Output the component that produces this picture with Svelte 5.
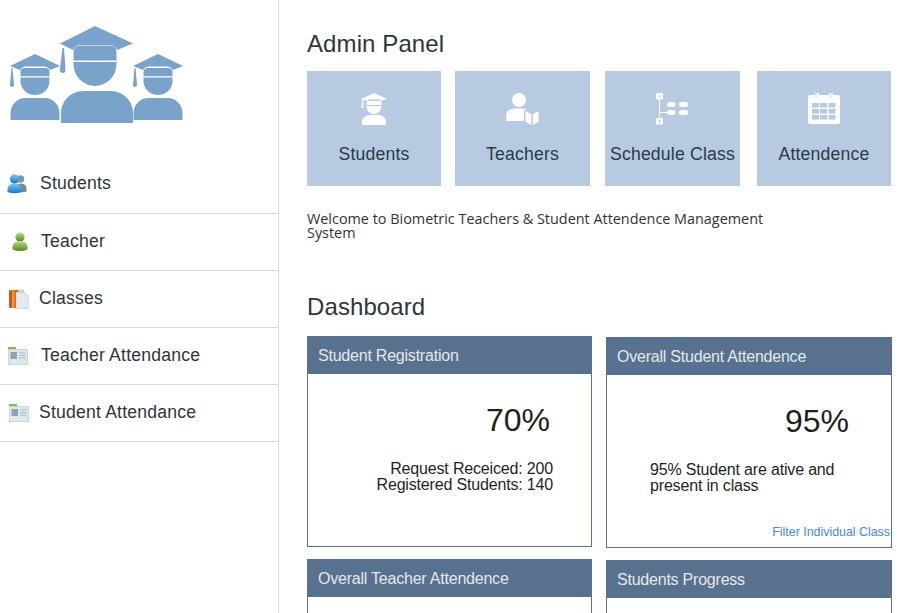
<script>
  // Panel de administración: menú lateral, accesos rápidos y tarjetas del dashboard
  const menu = [
    { nombre: "Students", icono: "students" },
    { nombre: "Teacher", icono: "teacher" },
    { nombre: "Classes", icono: "classes" },
    { nombre: "Teacher Attendance", icono: "card" },
    { nombre: "Student Attendance", icono: "card" }
  ];
</script>

{#snippet chico(x, y)}
  <g transform="translate({x} {y})">
    <path d="M0 0 L25 12 L15 16 Q13 12.5 9 12.5 L-9 12.5 Q-13 12.5 -15 16 L-25 12 Z" />
    <path d="M-23.5 14 L-22.5 14 L-21 31 Q-21 33 -23 33 Q-25.5 33 -25 30 Z" />
    <path d="M-14.5 17.5 Q-14.5 14 -10 14 L10 14 Q14.5 14 14.5 17.5 L14.5 22.3 L-14.5 22.3 Z" />
    <path d="M-14.5 23.5 L14.5 23.5 L14.5 27 A14.5 14 0 0 1 -14.5 27 Z" />
    <path d="M-24.5 66 V59 A15 15 0 0 1 -9.5 44 H9.5 A15 15 0 0 1 24.5 59 V66 Z" />
  </g>
{/snippet}

<div class="page">
  <aside class="sidebar">
    <svg class="logo" viewBox="0 0 190 130" width="190" height="130" fill="#7aa3cb">
      {@render chico(35, 44)}
      {@render chico(158, 44)}
      <g transform="translate(95 16)">
        <path d="M0 0 L38 17.5 L22 24 Q20 19 14 19 L-14 19 Q-20 19 -22 24 L-35 17.5 Z" />
        <path d="M-32.5 22 L-31 22 L-29.5 44 Q-29.5 47 -32 47 Q-35.5 47 -35 43 Z" />
        <path d="M-21.5 26 Q-21.5 19.5 -15 19.5 L15 19.5 Q21.5 19.5 21.5 26 L21.5 34.5 L-21.5 34.5 Z" />
        <path d="M-21.5 36 L21.5 36 L21.5 38 A21.5 22 0 0 1 -21.5 38 Z" />
        <path d="M-34 97 V87 A22 22 0 0 1 -12 65 H16 A22 22 0 0 1 38 87 V97 Z" />
      </g>
    </svg>

    <nav class="menu">
      {#each menu as item, i}
        <div class="item fila-{i + 1}">
          <span class="icono">
            {#if item.icono === "students"}
              <svg viewBox="0 0 20 20" width="20" height="20">
                <defs>
                  <linearGradient id="azul" x1="0" y1="0" x2="0" y2="1">
                    <stop offset="0" stop-color="#7cc6f2" />
                    <stop offset="1" stop-color="#1a78c8" />
                  </linearGradient>
                </defs>
                <circle cx="13.5" cy="5" r="3.8" fill="#7e95a3" />
                <path d="M9 18.5 L9 12 Q10 9.5 13.5 9.5 Q19 9.5 19.5 14 L19.5 18 Z" fill="#74899a" />
                <circle cx="7.5" cy="5" r="4.7" fill="url(#azul)" />
                <path d="M0.5 18 L0.5 15 Q1 9.5 7.5 9.5 Q14 9.5 14.5 15 L14.5 18 Q7.5 20.5 0.5 18 Z" fill="url(#azul)" />
              </svg>
            {:else if item.icono === "teacher"}
              <svg viewBox="0 0 16 20" width="16" height="20">
                <defs>
                  <linearGradient id="verde" x1="0" y1="0" x2="0" y2="1">
                    <stop offset="0" stop-color="#c4dc8e" />
                    <stop offset="1" stop-color="#4f8a23" />
                  </linearGradient>
                </defs>
                <circle cx="8" cy="5" r="4.6" fill="url(#verde)" />
                <path d="M0.5 17.5 L0.5 14 Q1.5 9 8 9 Q14.5 9 15.5 14 L15.5 17.5 Q8 20.5 0.5 17.5 Z" fill="url(#verde)" />
              </svg>
            {:else if item.icono === "classes"}
              <svg viewBox="0 0 20 20" width="20" height="20">
                <rect x="0" y="1" width="13" height="18" rx="1" fill="#c9581a" />
                <rect x="3" y="1" width="2.5" height="18" fill="#eb9a3f" />
                <path d="M7 3 L15 3 L20 8 L20 19.5 L7 19.5 Z" fill="#e4e9ed" stroke="#b9c4cb" stroke-width="0.6" />
                <rect x="9" y="0.5" width="6" height="3.5" rx="1" fill="#c8d0d6" />
                <rect x="0.5" y="1" width="6" height="1.5" fill="#e07a2c" />
              </svg>
            {:else}
              <svg viewBox="0 0 20 18" width="20" height="18">
                <rect x="0" y="0" width="8" height="2.5" fill="#7fbf4d" />
                <rect x="0.3" y="2.3" width="19.4" height="15.4" fill="#dde7ec" stroke="#b9c9d1" stroke-width="0.6" />
                <rect x="2.5" y="5" width="6.5" height="7" fill="#8ba3b2" />
                <path d="M11 6 H17.5 M11 8.5 H17.5 M11 11 H17.5" stroke="#a9b9c2" stroke-width="1" />
              </svg>
            {/if}
          </span>
          <span class="texto">{item.nombre}</span>
        </div>
      {/each}
    </nav>
  </aside>

  <main class="content">
    <h1>Admin Panel</h1>

    <div class="tiles">
      <div class="tile t1">
        <svg viewBox="0 0 26 34" width="26" height="34" fill="#fff">
          <path d="M13 0 L26 6 L20 8 Q19 6.5 17 6.5 L9 6.5 Q7 6.5 6 8 L0 6 Z" />
          <path d="M1 7 L2 7 L2.6 15 L0.5 15 Z" />
          <path d="M5.5 9.5 Q5.5 8 8 8 L18 8 Q20.5 8 20.5 9.5 L20.5 12 L5.5 12 Z" />
          <path d="M5.5 13 L20.5 13 A7.5 8 0 0 1 5.5 13 Z" />
          <path d="M1 32 L1 28 A8 7 0 0 1 9 22 L17 22 A8 7 0 0 1 25 28 L25 32 Z" />
        </svg>
        <span>Students</span>
      </div>
      <div class="tile t2">
        <svg viewBox="0 0 33 33" width="33" height="33" fill="#fff">
          <circle cx="13" cy="7" r="7" />
          <path d="M0 28 L0 22 A8 7 0 0 1 8 15.5 L18 15.5 A8 7 0 0 1 20 16 L18 18 L18 28 Z" />
          <path d="M19.5 18 L25.5 21 L25.5 32 L19.5 29 Z" />
          <path d="M27 21 L32.5 18 L32.5 29 L27 32 Z" />
        </svg>
        <span>Teachers</span>
      </div>
      <div class="tile t3">
        <svg viewBox="0 0 33 33" width="33" height="33" fill="#fff">
          <rect x="0" y="0" width="7" height="6.5" rx="1.2" />
          <rect x="0" y="25" width="7" height="6.5" rx="1.2" />
          <rect x="3" y="6" width="1" height="19" />
          <rect x="3" y="19" width="8" height="1" />
          <rect x="11" y="9" width="8.5" height="5" rx="2.5" />
          <rect x="23" y="9" width="9" height="5" rx="2.5" />
          <rect x="11" y="17" width="8.5" height="5" rx="2.5" />
          <rect x="23" y="17" width="9" height="5" rx="2.5" />
          <path d="M2 3.2 H5 M2 28.2 H5 M3.5 26.8 V29.7" stroke="#b7cae1" stroke-width="0.9" />
        </svg>
        <span>Schedule Class</span>
      </div>
      <div class="tile t4">
        <svg viewBox="0 0 33 33" width="33" height="33">
          <path d="M2 2 H7 V0.5 Q9 -1 11 0.5 V2 H21 V0.5 Q23 -1 25 0.5 V2 H30 Q32 2 32 4 V29 Q32 31 30 31 H2 Q0 31 0 29 V4 Q0 2 2 2 Z" fill="#fff" />
          {#each [10, 16, 22] as y}
            {#each [4, 12, 20.5] as x}
              <rect {x} {y} width="7" height="4.6" fill="#b7cae1" />
            {/each}
          {/each}
          <path d="M8 0 V5 M23 0 V5" stroke="#b7cae1" stroke-width="0.8" />
        </svg>
        <span>Attendence</span>
      </div>
    </div>

    <p class="bienvenida">Welcome to Biometric Teachers &amp; Student Attendence Management System</p>

    <h2>Dashboard</h2>

    <div class="panels">
      <section class="panel">
        <header>Student Registration</header>
        <div class="cuerpo">
          <div class="valor v1">70%</div>
          <p class="nota derecha">Request Receiced: 200<br />Registered Students: 140</p>
        </div>
      </section>
      <section class="panel baja">
        <header>Overall Student Attendence</header>
        <div class="cuerpo">
          <div class="valor v2">95%</div>
          <p class="nota izquierda">95% Student are ative and present in class</p>
          <span class="filtro">Filter Individual Class</span>
        </div>
      </section>
      <section class="panel">
        <header>Overall Teacher Attendence</header>
        <div class="cuerpo"></div>
      </section>
      <section class="panel baja">
        <header>Students Progress</header>
        <div class="cuerpo"></div>
      </section>
    </div>
  </main>
</div>

<style>
  :global(body) {
    background: #fff;
    font-family: "Liberation Sans", Arial, sans-serif;
  }

  .page {
    display: flex;
    height: 613px;
    overflow: hidden;
    color: #2d3640;
  }

  .sidebar {
    width: 278px;
    flex: none;
    border-right: 1px solid #dedede;
  }

  .logo {
    display: block;
    margin-top: 10px;
  }

  .menu {
    margin-top: 17px;
  }

  .item {
    display: flex;
    align-items: center;
    box-sizing: border-box;
    height: 57px;
    border-bottom: 1px solid #d9d9d9;
    font-size: 17.6px;
    letter-spacing: 0.2px;
    padding-bottom: 1px;
  }

  .icono {
    display: flex;
    flex: none;
  }

  .fila-1 { padding-bottom: 3px; }
  .fila-1 .icono { margin-left: 7px; }
  .fila-1 .texto { margin-left: 13px; }
  .fila-2 .icono { margin-left: 12px; }
  .fila-2 .texto { margin-left: 13px; }
  .fila-3 .icono { margin-left: 9px; }
  .fila-3 .texto { margin-left: 10px; }
  .fila-4 .icono { margin-left: 8px; }
  .fila-4 .texto { margin-left: 13px; }
  .fila-5 .icono { margin-left: 9px; }
  .fila-5 .texto { margin-left: 10px; }

  .content {
    padding-left: 28px;
    flex: 1;
  }

  h1,
  h2 {
    font-weight: 400;
    font-size: 24px;
    margin: 0;
    letter-spacing: 0.1px;
    color: #2d3640;
  }

  h1 {
    margin-top: 30px;
    line-height: 28px;
  }

  .tiles {
    display: flex;
    margin-top: 13px;
  }

  .tile {
    height: 115px;
    background: #b7cae1;
    display: flex;
    flex-direction: column;
    align-items: center;
    font-size: 17.6px;
    letter-spacing: 0.2px;
    color: #2b3a48;
    box-sizing: border-box;
    padding-top: 22px;
    position: relative;
  }

  .tile span {
    position: absolute;
    top: 73px;
    white-space: nowrap;
  }

  .t1 { width: 134px; }
  .t2 { width: 135px; margin-left: 14px; }
  .t3 { width: 135px; margin-left: 15px; }
  .t4 { width: 134px; margin-left: 17px; }

  .bienvenida {
    width: 480px;
    margin: 26px 0 0;
    font-family: "Open Sans", sans-serif;
    font-size: 14.4px;
    line-height: 14px;
    color: #333;
  }

  h2 {
    margin-top: 53px;
    line-height: 28px;
  }

  .panels {
    display: grid;
    grid-template-columns: 285px 286px;
    column-gap: 14px;
    row-gap: 12px;
    margin-top: 15px;
  }

  .panel {
    height: 211px;
    border: 1px solid #57718f;
    box-sizing: border-box;
    display: flex;
    flex-direction: column;
  }

  .baja {
    position: relative;
    top: 1px;
  }

  .panel header {
    height: 37px;
    flex: none;
    background: #57718f;
    color: #e3e8ee;
    font-size: 16px;
    letter-spacing: -0.22px;
    line-height: 38px;
    padding-left: 10px;
  }

  .cuerpo {
    position: relative;
    flex: 1;
    color: #1f1f1f;
  }

  .valor {
    position: absolute;
    top: 27px;
    font-size: 32px;
    line-height: 38px;
  }

  .v1 { right: 41px; }
  .v2 { right: 42px; }

  .nota {
    position: absolute;
    top: 87px;
    margin: 0;
    font-size: 16px;
    letter-spacing: -0.17px;
    line-height: 16px;
  }

  .derecha {
    right: 38px;
    text-align: right;
  }

  .izquierda {
    left: 43px;
    width: 200px;
  }

  .filtro {
    position: absolute;
    right: 1px;
    bottom: 8px;
    font-size: 12.4px;
    color: #4a89dc;
  }
</style>
